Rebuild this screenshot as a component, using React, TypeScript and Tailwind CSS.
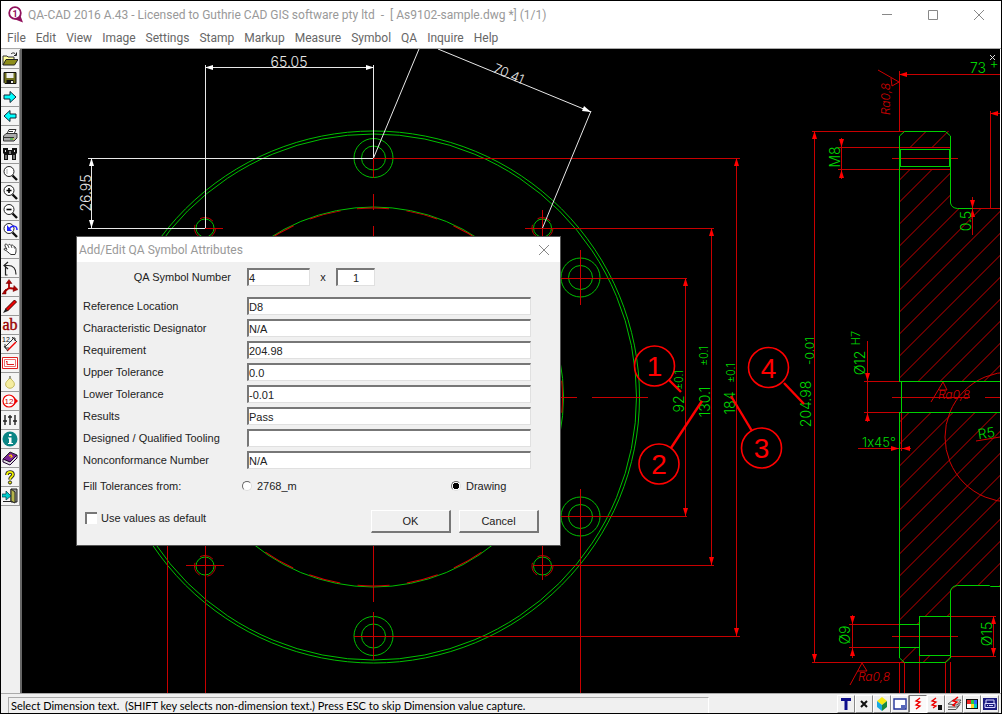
import React from 'react';

const menus = ['File', 'Edit', 'View', 'Image', 'Settings', 'Stamp', 'Markup', 'Measure', 'Symbol', 'QA', 'Inquire', 'Help'];

const fields = [
  { id: 'location', label: 'Reference Location', value: 'D8' },
  { id: 'designator', label: 'Characteristic Designator', value: 'N/A' },
  { id: 'requirement', label: 'Requirement', value: '204.98' },
  { id: 'upper', label: 'Upper Tolerance', value: '0.0' },
  { id: 'lower', label: 'Lower Tolerance', value: '-0.01' },
  { id: 'results', label: 'Results', value: 'Pass' },
  { id: 'tooling', label: 'Designed / Qualified Tooling', value: '' },
  { id: 'nonconformance', label: 'Nonconformance Number', value: 'N/A' },
];

const magnifier = (
  <>
    <circle cx="7" cy="6.5" r="5" fill="#fff" stroke="#222" />
    <path d="M10.5 10.5 15 15" stroke="#111" strokeWidth="2.4" />
  </>
);

const tools: { name: string; icon: React.ReactNode }[] = [
  {
    name: 'Open',
    icon: (
      <>
        <path d="M1 14V5h4l1 1h6v3" fill="#ffff9c" stroke="#333" />
        <path d="M1 14 4 8.500h12L12.500 14z" fill="#8c8c1a" stroke="#222" />
        <path d="M9 3c2-2 4-1 5 1m.5-2.500V4.500H12" fill="none" stroke="#222" />
      </>
    ),
  },
  {
    name: 'Save',
    icon: (
      <>
        <path d="M2 2.500h12v11H3l-1-1z" fill="#6f6f1c" stroke="#111" />
        <path d="M4.500 3h7v5h-7z" fill="#eee" />
        <path d="M4.500 10h7v3.500h-7z" fill="#111" />
        <path d="M9 11h2v2H9z" fill="#eee" />
      </>
    ),
  },
  { name: 'Next', icon: <path d="M2 6h6V2.500l6 5.500-6 5.500V10H2z" fill="#0ff" stroke="#123" /> },
  { name: 'Previous', icon: <path d="M14 6H8V2.500L2 8l6 5.500V10h6z" fill="#0ff" stroke="#123" /> },
  {
    name: 'Print',
    icon: (
      <>
        <path d="M5 7 7 2.500h7L12 7" fill="#fff" stroke="#333" />
        <path d="M1.500 9 4 6.500h11V11l-3 3H1.500z" fill="#aaa" stroke="#333" />
        <path d="M2 10.500h10M7 4.500h4" stroke="#333" />
        <path d="M8 12h3" stroke="#2b2" />
        <path d="M11 12h1.500" stroke="#dd0" />
      </>
    ),
  },
  {
    name: 'Find',
    icon: (
      <>
        <path d="M1 2h5v2h4V2h5v5l-1 1v6h-4V9H6v5H2V8L1 7z" fill="#111" />
        <path d="M3.500 4v2M4 9v4M12.500 4v2M12 9v4M8 5v3" stroke="#ddd" />
      </>
    ),
  },
  { name: 'Zoom window', icon: <>{magnifier}<path d="M5 4v5" stroke="#aaa" /></> },
  { name: 'Zoom in', icon: <>{magnifier}<path d="M4.500 6.500h5M7 4v5" stroke="#000" strokeWidth="1.600" /></> },
  { name: 'Zoom out', icon: <>{magnifier}<path d="M4.500 6.500h5" stroke="#000" strokeWidth="1.600" /></> },
  {
    name: 'Zoom previous',
    icon: (
      <>
        {magnifier}
        <path d="M7 7c3-4 8-4 8 1" fill="none" stroke="#22f" strokeWidth="1.500" />
        <path d="M5 3v6h5z" fill="#22f" />
      </>
    ),
  },
  {
    name: 'Pan',
    icon: (
      <>
        <path d="M3 3.500c1-1 2 0 3 1C7 3 8 3 9 4.500c1-1 2-.5 3 1 1 0 2 1 2 3 0 2 0 3-1 5H9c-2-1-4-4-7-5 0-2 2-1 3 0L3 5z" fill="#fff" stroke="#333" />
        <path d="m6 4.500 1 2.500M9 4.500 10 7M12 5.500l.5 2" stroke="#555" />
      </>
    ),
  },
  { name: 'Undo', icon: <path d="M3.500 5v10h2M2 5.500h4c5 0 8 3 8 9M6 2 2 5.500 6 9" fill="none" stroke="#222" strokeWidth="1.200" /> },
  {
    name: 'Move origin',
    icon: (
      <>
        <path d="M7 9V3M7 9l7 1M7 9l-5 4" stroke="#b00000" strokeWidth="1.800" />
        <path d="M4 4.500 7 .5l3 4zM12 6.500l4 4-5 2zM4 10v5H0z" fill="#b00000" stroke="#600" strokeWidth=".5" />
      </>
    ),
  },
  {
    name: 'Draw',
    icon: (
      <>
        <path d="M3.500 11 12.500 2l2 2-9 9z" fill="#e00" stroke="#400" />
        <path d="m3.500 10.500 2.500 2.500-5 2z" fill="#222" />
      </>
    ),
  },
  {
    name: 'Text',
    icon: <text x="8" y="13" textAnchor="middle" fontSize="16" fontFamily="Liberation Serif, serif" fill="#900" stroke="#900" strokeWidth=".4">ab</text>,
  },
  {
    name: 'Dimension',
    icon: (
      <>
        <text x="0" y="6" fontSize="7" fontFamily="Liberation Sans, sans-serif" fill="#111">12.</text>
        <path d="m5 15 9-9" stroke="#e00" strokeWidth="1.500" />
        <path d="m2 10 4 5M10 1l5 5M3 11l8-8M3 8v4h4M10 2h3v3" fill="none" stroke="#333" />
      </>
    ),
  },
  {
    name: 'Title block',
    icon: (
      <>
        <path d="M.5 2.500h15v11H.5z" fill="#fff" stroke="#e02020" />
        <path d="M2.500 4.500h11v7h-11z" fill="#fff" stroke="#e87070" />
        <path d="M5 6v3.500h7M4 6.500h1" fill="none" stroke="#e02020" />
      </>
    ),
  },
  {
    name: 'Highlight',
    icon: (
      <>
        <path d="M8 2 9 5c3 3 4 4 3 7-2 3-6 3-8 0-1-3 0-4 3-7z" fill="#f5eda0" stroke="#c4b95c" />
        <path d="M7 2h2v3H7z" fill="#998" />
      </>
    ),
  },
  {
    name: 'Balloon',
    icon: (
      <>
        <path d="m12 4 4 4-4 4z" fill="#e00" />
        <circle cx="7" cy="8" r="6" fill="#fff" stroke="#e00" strokeWidth="1.200" />
        <text x="7" y="11" textAnchor="middle" fontSize="8" fontFamily="Liberation Sans, sans-serif" fill="#c00">12</text>
      </>
    ),
  },
  { name: 'Options', icon: <path d="M3 3v10M8 3v10M13 3v10M1 9h4M6 5h4M11 9h4" stroke="#222" strokeWidth="1.400" /> },
  {
    name: 'Information',
    icon: (
      <>
        <circle cx="8" cy="8" r="7.500" fill="#0b8585" />
        <path d="M6 6.500h3.500V12H11v1H6v-1h1V7.500H6zM7 3h2.500v2H7z" fill="#fff" />
      </>
    ),
  },
  {
    name: 'Manual',
    icon: (
      <>
        <path d="M1 9 8 2l7 3-7 7z" fill="#7b2394" stroke="#222" />
        <path d="m1 9 7 3 7-7v3l-7 7-7-3z" fill="#ddd" stroke="#203" />
        <path d="m7 6 2-1 1 1.500-1.500 1" fill="none" stroke="#fc0" strokeWidth="1.200" />
      </>
    ),
  },
  {
    name: 'Help',
    icon: (
      <>
        <path d="M5 6c0-4 6-4 6-.5C11 8 8 7.500 8 10.500" fill="none" stroke="#222" strokeWidth="3.600" />
        <path d="M5 6c0-4 6-4 6-.5C11 8 8 7.500 8 10.500" fill="none" stroke="#ee0" strokeWidth="1.800" />
        <circle cx="8" cy="13.500" r="1.600" fill="#ee0" stroke="#222" />
      </>
    ),
  },
  {
    name: 'Exit',
    icon: (
      <>
        <path d="M9 1h6v13H9z" fill="#999" stroke="#222" />
        <path d="m9 1 4 3v11l-4-2z" fill="#b5b54c" stroke="#222" />
        <path d="M1 13.500h8" stroke="#222" />
        <path d="M0 6h4V3l5 5-5 4V9H0z" fill="#0cc" stroke="#034" strokeWidth=".7" />
      </>
    ),
  },
];

const squiggle = 'M10 2 6 5l4 1-4 3 4 1-4 3';

const statusButtons: { name: string; pressed?: boolean; icon: React.ReactNode }[] = [
  { name: 'Text mode', icon: <path d="M3 2h10v3h-3.500v9h-3V5H3z" fill="#10108c" /> },
  { name: 'Close tool', icon: <path d="m5 5 6 6m0-6-6 6" stroke="#111" strokeWidth="2" /> },
  {
    name: 'Colour cube',
    icon: (
      <>
        <path d="m8 1 5 4-5 4-5-4z" fill="#f4ea10" />
        <path d="m3 5 5 4v6l-5-4z" fill="#18a8e0" />
        <path d="m13 5-5 4v6l5-4z" fill="#1b8a3c" />
      </>
    ),
  },
  {
    name: 'Paper space',
    icon: (
      <>
        <path d="M2 3h12v10H2z" fill="#fff" stroke="#223399" strokeWidth="1.400" />
        <path d="M9 9h4v3H9z" fill="#5566bb" />
      </>
    ),
  },
  { name: 'Markup', pressed: true, icon: <path d={squiggle} fill="none" stroke="#e00" strokeWidth="1.300" /> },
  {
    name: 'Lock markup',
    icon: (
      <>
        <path d="M8 2 4 5l4 1-4 3 4 1-3 2" fill="none" stroke="#e00" strokeWidth="1.300" />
        <path d="M10 9h4v5h-4z" fill="#111" />
      </>
    ),
  },
  {
    name: 'Markup layers',
    icon: (
      <>
        <path d="m2 8 5-4h8l-4 5zM2 11l9 0 4-5M2 13.500h8l4-5" fill="none" stroke="#555" />
        <path d="M12 1 7 5l4 1-4 3 2 1" fill="none" stroke="#e00" strokeWidth="1.500" />
      </>
    ),
  },
  {
    name: 'Palette',
    icon: (
      <>
        <path d="M2 3h12v10H2z" fill="#111" />
        <path d="M3 4h4v4H3z" fill="#e22" />
        <path d="M7 4h3v4H7z" fill="#2c4" />
        <path d="M10 4h3v4h-3z" fill="#36f" />
        <path d="M3 8h4v4H3z" fill="#fff" />
        <path d="M7 8h3v4H7z" fill="#fd2" />
        <path d="M10 8h3v4h-3z" fill="#0cc" />
      </>
    ),
  },
  {
    name: 'Plot',
    icon: (
      <>
        <path d="M1 2h14v12H1z" fill="#1a1a80" />
        <path d="M4 7V4h8v3M3 7.500h10v4H3zM5 9.500h1M7 9.500h4" fill="none" stroke="#d8d8ff" />
      </>
    ),
  },
];

const balloons = [
  { n: 1, x: 654.5, y: 366, line: 'M669 380 681 392' },
  { n: 2, x: 659, y: 464, line: 'M671 448 702 401' },
  { n: 3, x: 761.5, y: 448, line: 'M752 431 731 396' },
  { n: 4, x: 768.5, y: 367.5, line: 'M784 383 804 404' },
];

// lines of the 45 degree section hatch, by where they leave the left edge
const hatch = Array.from({ length: 30 }, (_, i) => 158 + i * 22);

type Dir = 'up' | 'down' | 'left' | 'right';

const Arrow: React.FC<{ x: number; y: number; dir: Dir; fill?: string }> = ({ x, y, dir, fill = '#f00' }) => {
  const angle = { up: 0, right: 90, down: 180, left: 270 }[dir];
  return <path d="M0 0 2.500 8h-5z" fill={fill} transform={`translate(${x} ${y}) rotate(${angle})`} />;
};

interface NoteProps {
  x: number;
  y: number;
  size?: number;
  angle?: number;
  fill?: string;
  italic?: boolean;
  children: React.ReactNode;
}

const Note: React.FC<NoteProps> = ({ x, y, size = 14, angle = 0, fill = '#00d800', italic, children }) => (
  <text
    transform={`translate(${x} ${y}) rotate(${angle})`}
    textAnchor="middle"
    fontSize={size}
    fill={fill}
    fontStyle={italic ? 'italic' : 'normal'}
  >
    {children}
  </text>
);

const Drawing: React.FC = () => (
  <svg
    className="absolute inset-0 h-full w-full font-['Inter','Liberation_Sans',sans-serif] font-light"
    viewBox="22 49 978 644"
    preserveAspectRatio="xMinYMin slice"
    fill="none"
  >
    <defs>
      <clipPath id="section">
        <path d="M899 131h51v16h-51zM899 169h51v34l7 5h43v173H899zM899 413h101v173h-43l-7 5v25h-31v8h-20zM899 648h20v7h31v7h-51z" />
      </clipPath>
    </defs>

    {/* flange, front view */}
    <g stroke="#00c000">
      <circle cx="373.5" cy="397" r="266" />
      <circle cx="373.5" cy="397" r="263" />
      <circle cx="373.5" cy="397" r="190" />
      {[[373.5, 158], [580.5, 277.5], [580.5, 516.5], [373.5, 636]].map(([x, y]) => (
        <g key={`${x}-${y}`}>
          <circle cx={x} cy={y} r="19.500" />
          <circle cx={x} cy={y} r="12" />
        </g>
      ))}
      {[[205, 228], [542.5, 228], [205, 566], [542.5, 566]].map(([x, y]) => (
        <g key={`${x}-${y}`}>
          <circle cx={x} cy={y} r="10.500" stroke="#c00000" strokeDasharray="14 8" />
          <circle cx={x} cy={y} r="9" />
        </g>
      ))}
    </g>
    <circle cx="373.5" cy="397" r="189" stroke="#d00000" strokeDasharray="32 17.500" transform="rotate(-95 373.5 397)" />

    {/* centre and extension lines */}
    <g stroke="#c80000" shapeRendering="crispEdges">
      <path d="M373.500 158v20M373.500 194v16M373.500 226v12M373.500 546v56M373.500 612v48M542.500 210v36M542.500 546v34M205.500 546v147M167.500 546v147M580.500 250v55M580.500 489v204" />
      <path d="M373 158.500h367M525 228.500h189M561 278.500h126M561 516.500h126M533 565.500h181M186 565.500h38M354 636.500h386M205 228.500h18M561 397.500h16M592 397.500h56" />
      <path d="M685.500 278v238M711.500 228v337M736.500 158v478" />
    </g>
    <Arrow x={685.5} y={278} dir="up" />
    <Arrow x={685.5} y={516} dir="down" />
    <Arrow x={711.5} y={228} dir="up" />
    <Arrow x={711.5} y={565} dir="down" />
    <Arrow x={736.5} y={158} dir="up" />
    <Arrow x={736.5} y={636} dir="down" />

    {/* captured dimensions */}
    <g stroke="#e8e8e8">
      <path shapeRendering="crispEdges" d="M205.500 65v163M373.500 65v93M205 67.500h168M88 158.500h285M88 228.500h117M91.500 158v70" />
      <path d="M373.500 158 419 49M438 49 591 112M591 111 542.500 228" />
    </g>
    <Arrow x={205} y={67.5} dir="left" fill="#fff" />
    <Arrow x={374} y={67.5} dir="right" fill="#fff" />
    <Arrow x={91.5} y={158} dir="up" fill="#fff" />
    <Arrow x={91.5} y={228} dir="down" fill="#fff" />
    <path d="m591 112-9-1 2-5z" fill="#fff" />
    <Note x={289} y={67} fill="#e8e8e8">65.05</Note>
    <Note x={91} y={193} angle={-90} fill="#e8e8e8">26.95</Note>
    <Note x={507} y={78} angle={23} fill="#e8e8e8" size={13}>70.41</Note>

    <Note x={684} y={404} angle={-90}>92</Note>
    <Note x={683} y={380} angle={-90} size={11}>±0.1</Note>
    <Note x={710} y={402} angle={-90}>130.1</Note>
    <Note x={708} y={356} angle={-90} size={11}>±0.1</Note>
    <Note x={735} y={403} angle={-90}>184</Note>
    <Note x={735} y={373} angle={-90} size={11}>±0.1</Note>
    <Note x={811} y={404} angle={-90}>204.98</Note>
    <Note x={814} y={351} angle={-90} size={12}>-0.01</Note>

    {balloons.map(({ n, x, y, line }) => (
      <g key={n} stroke="#f00">
        <circle cx={x} cy={y} r="20" strokeWidth="1.600" />
        <path d={line} strokeWidth="2.400" />
        <text x={x} y={y + 10} textAnchor="middle" className="font-['Liberation_Sans',sans-serif] font-normal" fontSize="28" fill="#f00" stroke="none">
          {n}
        </text>
      </g>
    ))}

    {/* section view */}
    <g clipPath="url(#section)" stroke="#c80000">
      {hatch.map(y => (
        <path key={y} d={`M899.500 ${y}l110-110`} />
      ))}
    </g>
    <g stroke="#c80000" shapeRendering="crispEdges">
      <path d="M812 131.500h93M812 662.500h93M814.500 131v531M899.500 71v60M899 74.500h101" />
      <path d="M838 147.500h112M838 169.500h112M841.500 138v41M892 158.500h66" />
      <path d="M990.500 111v97M990 113.500h10M972.500 197v38M971 208.500h29" />
      <path d="M867.500 341v81M864 381.500h35M864 412.500h35M892 397.500h78M985 397.500h15" />
      <path d="M858 448.500h53M901.500 382v69" />
      <path d="M852.500 615v43M849 624.500h50M849 647.500h50M892 636.500h66" />
      <path d="M993.500 616v40M950 616.500h46M950 656.500h46" />
      <path d="M899.500 662v31M904.500 662v31M919.500 655v38M945.500 662v31M950.500 662v31" />
    </g>
    <g stroke="#d00000">
      <circle cx="1010" cy="437" r="65" />
      <path d="m976 441 24-4" />
      <path d="m878 70 21 12-7 4-1-8M931 402l12-20 4 8h-8M850 685l12-22 5 8h-9" />
    </g>
    <Arrow x={814.5} y={131} dir="up" />
    <Arrow x={814.5} y={662} dir="down" />
    <Arrow x={899} y={74.5} dir="left" />
    <Arrow x={990} y={113.5} dir="left" />
    <Arrow x={841.5} y={147} dir="down" />
    <Arrow x={841.5} y={170} dir="up" />
    <Arrow x={972.5} y={208} dir="down" />
    <Arrow x={972.5} y={209} dir="up" />
    <Arrow x={867.5} y={381} dir="down" />
    <Arrow x={867.5} y={413} dir="up" />
    <Arrow x={899} y={448.5} dir="right" />
    <Arrow x={902} y={448.5} dir="left" />
    <Arrow x={852.5} y={624} dir="down" />
    <Arrow x={852.5} y={648} dir="up" />
    <Arrow x={993.5} y={616} dir="up" />
    <Arrow x={993.5} y={656} dir="down" />
    <g stroke="#00d000">
      <path d="M899.500 382V136l5-4.500h41l5 4.500v67q1 5 7 5.500h15M899.500 412v246l5 4.500h41l5-4.500v-67q1-5 7-5.500h32l1 1h10" />
      <path shapeRendering="crispEdges" d="M900.500 149.500h49v17h-49zM899 381.500h101M899 412.500h101M901.500 382v30M899 624.500h20M899 647.500h20M919.500 616v39M919 616.500h31M919 655.500h31" />
    </g>

    <Note x={840} y={157} angle={-90}>M8</Note>
    <Note x={971} y={221} angle={-90}>0.5</Note>
    <Note x={865} y={363} angle={-90}>Ø12</Note>
    <Note x={860} y={338} angle={-90} size={11}>H7</Note>
    <Note x={850} y={635} angle={-90}>Ø9</Note>
    <Note x={992} y={634} angle={-90}>Ø15</Note>
    <Note x={978} y={73}>73</Note>
    <Note x={994} y={68}>+</Note>
    <text x="879" y="447" textAnchor="middle" fontSize="13" fill="#00d800" className="[font-feature-settings:'calt'_0]">1x45°</text>
    <Note x={987} y={438} angle={-8}>R5</Note>
    <Note x={890} y={99} angle={-90} size={12} fill="#d00000" italic>Ra0,8</Note>
    <Note x={954} y={399} size={12} fill="#d00000" italic>Ra0,8</Note>
    <Note x={874} y={681} size={12} fill="#d00000" italic>Ra0,8</Note>
    <path d="m990 55 5 5m0-5-5 5" stroke="#ddd" />
  </svg>
);

const inputClass =
  'h-[18px] w-full border-t-2 border-l-2 border-r border-b border-t-[#777] border-l-[#777] border-r-[#e0e0e0] border-b-[#e0e0e0] bg-white text-[11px] leading-[14px] outline-none';

const radioClass =
  'h-[10px] w-[10px] appearance-none rounded-full border border-t-[#666] border-l-[#666] border-r-[#ddd] border-b-[#ddd] bg-white';

const buttonClass =
  'h-[23px] w-20 border-t border-l border-r-2 border-b-2 border-t-white border-l-white border-r-[#777] border-b-[#777] bg-[#f0f0f0]';

const AttributesDialog: React.FC = () => (
  <section
    role="dialog"
    aria-labelledby="dialog-title"
    className="absolute top-[187px] left-[54px] w-[485px] border border-[#555] bg-[#f0f0f0] text-[11px] leading-[14px] text-[#222]"
  >
    <header className="flex h-[25px] items-center justify-between bg-white pr-[10px] pl-0.5">
      <h2 id="dialog-title" className="font-[Roboto,'Noto_Sans',sans-serif] text-xs text-[#999]">Add/Edit QA Symbol Attributes</h2>
      <button aria-label="Close dialog">
        <svg width="12" height="12" viewBox="0 0 12 12" stroke="#888" fill="none"><path d="m1 1 10 10M11 1 1 11" /></svg>
      </button>
    </header>
    <form className="pt-[6px] pr-[29px] pb-3 pl-[6px]" onSubmit={e => e.preventDefault()}>
      <div className="mb-[11px] flex items-center">
        <label htmlFor="number" className="w-[164px] pr-4 text-right">QA Symbol Number</label>
        <div className="w-[63px]"><input id="number" className={inputClass} defaultValue="4" /></div>
        <label htmlFor="count" className="w-[26px] text-center">x</label>
        <div className="w-[39px]"><input id="count" className={`${inputClass} text-center`} defaultValue="1" /></div>
      </div>
      <div className="grid grid-cols-[164px_1fr] items-center gap-y-1">
        {fields.map(({ id, label, value }) => (
          <React.Fragment key={id}>
            <label htmlFor={id}>{label}</label>
            <input id={id} className={inputClass} defaultValue={value} />
          </React.Fragment>
        ))}
      </div>
      <div role="radiogroup" aria-labelledby="fill-label" className="mt-[10px] flex items-center">
        <span id="fill-label" className="w-[159px]">Fill Tolerances from:</span>
        <label className="flex w-[209px] items-center gap-[5px]">
          <input type="radio" name="source" className={radioClass} />
          2768_m
        </label>
        <label className="flex items-center gap-[5px]">
          <input type="radio" name="source" defaultChecked className={`${radioClass} bg-[radial-gradient(circle,#000_3px,#fff_3px)]`} />
          Drawing
        </label>
      </div>
      <div className="mt-[17px] flex items-start justify-between">
        <label className="flex items-center gap-1 pt-px pl-0.5">
          <input type="checkbox" className="h-3 w-3 appearance-none border-t-2 border-l-2 border-t-[#777] border-l-[#777] bg-white" />
          Use values as default
        </label>
        <div className="-mr-2 flex gap-2">
          <button type="submit" className={buttonClass}>OK</button>
          <button type="button" className={buttonClass}>Cancel</button>
        </div>
      </div>
    </form>
  </section>
);

const App: React.FC = () => (
  <div className="flex h-screen flex-col overflow-hidden border border-black bg-white font-['Liberation_Sans',Arial,sans-serif] text-[#222]">
    <header className="flex h-[27px] items-center pl-[7px] font-[Roboto,'Noto_Sans',sans-serif] text-xs text-[#999]">
      <svg width="16" height="17" viewBox="0 0 16 17" className="mr-1">
        <path d="M12 8.500 15 16.500 6 13z" fill="#90105c" />
        <circle cx="7" cy="7" r="5.800" fill="#fff" stroke="#90105c" strokeWidth="1.800" />
        <text x="7" y="10.500" textAnchor="middle" fontSize="9" fontWeight="700" fill="#90105c">1</text>
      </svg>
      <h1 className="flex-1 whitespace-pre">QA-CAD 2016 A.43 - Licensed to Guthrie CAD GIS software pty ltd  -  [ As9102-sample.dwg *] (1/1)</h1>
      <div className="flex gap-[34px] pr-4">
        <button aria-label="Minimize">
          <svg width="12" height="12" viewBox="0 0 12 12"><path d="M1 5.500h10" stroke="#888" /></svg>
        </button>
        <button aria-label="Maximize">
          <svg width="12" height="12" viewBox="0 0 12 12"><path d="M1.500 1.500h9v9h-9z" fill="none" stroke="#888" /></svg>
        </button>
        <button aria-label="Close">
          <svg width="12" height="12" viewBox="0 0 12 12"><path d="m1 1 10 10M11 1 1 11" stroke="#888" /></svg>
        </button>
      </div>
    </header>
    <nav className="flex h-[21px] items-center gap-[10px] border-b border-[#aaa] pl-[6px] font-[Roboto,'Noto_Sans',sans-serif] text-xs text-[#666]">
      {menus.map(menu => (
        <button key={menu}>{menu}</button>
      ))}
    </nav>
    <main className="flex min-h-0 flex-1">
      <div role="toolbar" className="flex w-[21px] shrink-0 flex-col border-r-2 border-[#666] bg-[#f0f0f0] pt-px">
        {tools.map(({ name, icon }) => (
          <button key={name} aria-label={name} className="flex h-[19px] items-center justify-center border-r border-b border-[#999] bg-[#f4f4f4]">
            <svg width="16" height="16" viewBox="0 0 16 16" fill="none">{icon}</svg>
          </button>
        ))}
      </div>
      <div className="relative flex-1 overflow-hidden border-r border-white bg-black">
        <Drawing />
        <AttributesDialog />
      </div>
    </main>
    <footer className="flex h-5 items-end justify-between border-t border-[#aaa] bg-[#f0f0f0] pr-0.5 pl-[7px] text-[11px] text-black">
      <p className="h-4 w-[701px] border-t border-l border-r border-t-[#aaa] border-r-white border-l-[#aaa] pl-0.5 font-[Lato,'Liberation_Sans',sans-serif] leading-[15px] whitespace-pre">
        Select Dimension text.  (SHIFT key selects non-dimension text.) Press ESC to skip Dimension value capture.
      </p>
      <div className="flex">
        {statusButtons.map(({ name, pressed, icon }) => (
          <button
            key={name}
            aria-label={name}
            aria-pressed={pressed}
            className={`flex h-[18px] w-[18px] items-center justify-center border ${
              pressed ? 'border-t-[#777] border-r-white border-b-white border-l-[#777] bg-[#fafafa]' : 'border-t-white border-r-[#888] border-b-[#888] border-l-white'
            }`}
          >
            <svg width="16" height="16" viewBox="0 0 16 16" fill="none">{icon}</svg>
          </button>
        ))}
      </div>
    </footer>
  </div>
);

export default App;
